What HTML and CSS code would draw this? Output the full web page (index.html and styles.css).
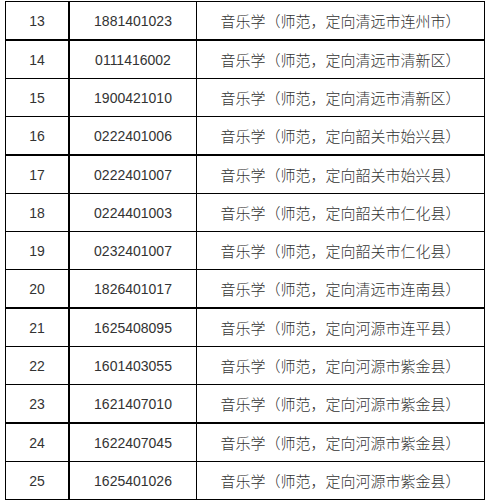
FILE: index.html
```html
<!DOCTYPE html>
<html lang="zh-CN">
<head>
<meta charset="utf-8">
<title>音乐学</title>
<link rel="stylesheet" href="styles.css">
</head>
<body>
<div class="table">
  <div class="row thick"><div class="cell c1">13</div><div class="cell c2">1881401023</div><div class="cell c3">音乐学（师范，定向清远市连州市）</div></div>
  <div class="row"><div class="cell c1">14</div><div class="cell c2">0111416002</div><div class="cell c3">音乐学（师范，定向清远市清新区）</div></div>
  <div class="row"><div class="cell c1">15</div><div class="cell c2">1900421010</div><div class="cell c3">音乐学（师范，定向清远市清新区）</div></div>
  <div class="row thick"><div class="cell c1">16</div><div class="cell c2">0222401006</div><div class="cell c3">音乐学（师范，定向韶关市始兴县）</div></div>
  <div class="row"><div class="cell c1">17</div><div class="cell c2">0222401007</div><div class="cell c3">音乐学（师范，定向韶关市始兴县）</div></div>
  <div class="row"><div class="cell c1">18</div><div class="cell c2">0224401003</div><div class="cell c3">音乐学（师范，定向韶关市仁化县）</div></div>
  <div class="row"><div class="cell c1">19</div><div class="cell c2">0232401007</div><div class="cell c3">音乐学（师范，定向韶关市仁化县）</div></div>
  <div class="row thick"><div class="cell c1">20</div><div class="cell c2">1826401017</div><div class="cell c3">音乐学（师范，定向清远市连南县）</div></div>
  <div class="row"><div class="cell c1">21</div><div class="cell c2">1625408095</div><div class="cell c3">音乐学（师范，定向河源市连平县）</div></div>
  <div class="row"><div class="cell c1">22</div><div class="cell c2">1601403055</div><div class="cell c3">音乐学（师范，定向河源市紫金县）</div></div>
  <div class="row thick"><div class="cell c1">23</div><div class="cell c2">1621407010</div><div class="cell c3">音乐学（师范，定向河源市紫金县）</div></div>
  <div class="row"><div class="cell c1">24</div><div class="cell c2">1622407045</div><div class="cell c3">音乐学（师范，定向河源市紫金县）</div></div>
  <div class="row"><div class="cell c1">25</div><div class="cell c2">1625401026</div><div class="cell c3">音乐学（师范，定向河源市紫金县）</div></div>
</div>
</body>
</html>
```
FILE: styles.css
```css
html, body {
  margin: 0;
  padding: 0;
  background: #ffffff;
}
body {
  padding: 1px 0 0 5px;
  font-family: "Liberation Sans", "Noto Sans CJK SC", sans-serif;
  font-size: 14px;
  color: #333333;
}
.table {
  display: flex;
  flex-direction: column;
  width: max-content;
  border-top: 1px solid #000;
  border-left: 1px solid #000;
}
.row {
  display: flex;
  height: 37px;
  border-bottom: 1px solid #000;
}
.row.thick {
  border-bottom-width: 2px;
}
.cell {
  display: flex;
  align-items: center;
  justify-content: center;
  white-space: nowrap;
  line-height: 1;
  padding-top: 1px;
  box-sizing: border-box;
}
.c1 {
  width: 62px;
  border-right: 2px solid #000;
  box-sizing: content-box;
}
.c2 {
  width: 126px;
  border-right: 1px solid #000;
  box-sizing: content-box;
}
.c3 {
  width: 287px;
  border-right: 1px solid #000;
  box-sizing: content-box;
  font-size: 15px;
  font-weight: 300;
}
```
